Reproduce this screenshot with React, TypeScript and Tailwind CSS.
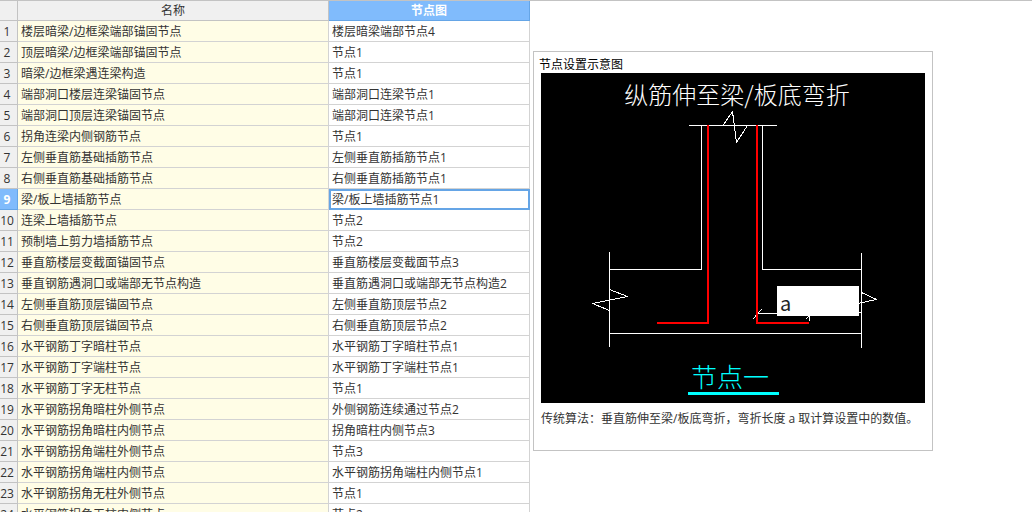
import { useState } from 'react';
import clsx from 'clsx';

interface NodeRow {
  name: string;
  node: string;
}

const rows: NodeRow[] = [
  { name: '楼层暗梁/边框梁端部锚固节点', node: '楼层暗梁端部节点4' },
  { name: '顶层暗梁/边框梁端部锚固节点', node: '节点1' },
  { name: '暗梁/边框梁遇连梁构造', node: '节点1' },
  { name: '端部洞口楼层连梁锚固节点', node: '端部洞口连梁节点1' },
  { name: '端部洞口顶层连梁锚固节点', node: '端部洞口连梁节点1' },
  { name: '拐角连梁内侧钢筋节点', node: '节点1' },
  { name: '左侧垂直筋基础插筋节点', node: '左侧垂直筋插筋节点1' },
  { name: '右侧垂直筋基础插筋节点', node: '右侧垂直筋插筋节点1' },
  { name: '梁/板上墙插筋节点', node: '梁/板上墙插筋节点1' },
  { name: '连梁上墙插筋节点', node: '节点2' },
  { name: '预制墙上剪力墙插筋节点', node: '节点2' },
  { name: '垂直筋楼层变截面锚固节点', node: '垂直筋楼层变截面节点3' },
  { name: '垂直钢筋遇洞口或端部无节点构造', node: '垂直筋遇洞口或端部无节点构造2' },
  { name: '左侧垂直筋顶层锚固节点', node: '左侧垂直筋顶层节点2' },
  { name: '右侧垂直筋顶层锚固节点', node: '右侧垂直筋顶层节点2' },
  { name: '水平钢筋丁字暗柱节点', node: '水平钢筋丁字暗柱节点1' },
  { name: '水平钢筋丁字端柱节点', node: '水平钢筋丁字端柱节点1' },
  { name: '水平钢筋丁字无柱节点', node: '节点1' },
  { name: '水平钢筋拐角暗柱外侧节点', node: '外侧钢筋连续通过节点2' },
  { name: '水平钢筋拐角暗柱内侧节点', node: '拐角暗柱内侧节点3' },
  { name: '水平钢筋拐角端柱外侧节点', node: '节点3' },
  { name: '水平钢筋拐角端柱内侧节点', node: '水平钢筋拐角端柱内侧节点1' },
  { name: '水平钢筋拐角无柱外侧节点', node: '节点1' },
  { name: '水平钢筋拐角无柱内侧节点', node: '节点2' },
];

function NodeTable() {
  const [selected, setSelected] = useState(8);

  return (
    <table className="shrink-0 table-fixed border-separate border-spacing-0 text-[#333333]">
      <colgroup>
        <col className="w-[18px]" />
        <col className="w-[311px]" />
        <col className="w-[201px]" />
      </colgroup>
      <thead>
        <tr className="h-5">
          <td className="border-r border-b border-[#c3c3c3] bg-[#f0f0f0] p-0" />
          <th scope="col" className="border-r border-b border-[#c3c3c3] bg-[#f0f0f0] p-0 pt-px font-normal">
            名称
          </th>
          <th scope="col" className="border-r border-b border-[#65a5e6] bg-[#80bbfc] p-0 pt-px font-bold text-white">
            节点图
          </th>
        </tr>
      </thead>
      <tbody>
        {rows.map((row, i) => (
          <tr key={row.name} className="h-[21px]" onClick={() => setSelected(i)}>
            <th
              scope="row"
              className={clsx(
                'border-r border-b p-0 pt-0.5 pr-[3px]',
                i === selected
                  ? 'border-[#65a5e6] bg-[#80bbfc] font-bold text-white'
                  : 'border-[#c3c3c3] bg-[#f0f0f0] font-normal'
              )}
            >
              {i + 1}
            </th>
            <td className="border-r border-b border-[#d3d3d3] bg-[#fffde6] p-0 pt-0.5 pl-[3px]">{row.name}</td>
            <td
              className={clsx(
                'border-r border-b border-[#d3d3d3] bg-white p-0 pt-0.5 pl-[3px]',
                i === selected && 'outline-2 -outline-offset-2 outline-[#65a5e6]'
              )}
            >
              {row.node}
            </td>
          </tr>
        ))}
      </tbody>
    </table>
  );
}

function NodeDiagram() {
  return (
    <div className="relative w-[384px] bg-black font-['Noto_Sans_CJK_SC',sans-serif]">
      <svg viewBox="0 0 384 330" className="block w-full" fill="none" shapeRendering="crispEdges">
        <text x="196" y="31" textAnchor="middle" fill="#ffffff" className="text-[24px] font-light">
          纵筋伸至梁/板底弯折
        </text>

        <g stroke="#ffffff" strokeWidth="1" strokeLinejoin="bevel">
          {/* wall outline with its break line */}
          <path d="M148 52.5H236M160.5 52V196.5H68M221.5 52V196.5H320" />
          <path d="M182 52.5L191.5 38.5L195.5 69.5L206.5 52.5" />
          {/* beam outline */}
          <path d="M68.5 179V274M320.5 180V275M68 260.5H320" />
          <path d="M68.5 216.5L86.5 223.5L51.5 230.5L68.5 237.5" />
          <path d="M320.5 219.5L335.5 226.5L302.5 233.5M318 239.5H321" />
          {/* bend length dimension */}
          <path d="M216 240.5H300M211.5 246.5L220.5 236.5M264.5 246.5L272.5 238.5M268.5 240V248" />
        </g>

        {/* vertical bars bent along the beam bottom */}
        <path d="M167 52V250H116M216 52V250H268" stroke="#ff0000" strokeWidth="2" />

        <text x="150" y="314" fill="#00ffff" className="text-[26px] font-light">
          节点一
        </text>
        <path d="M147 320.5H238" stroke="#00ffff" strokeWidth="3" />
      </svg>
      <input
        type="text"
        aria-label="弯折长度 a"
        defaultValue="a"
        className="absolute top-[213px] left-[236px] h-[30px] w-[82px] bg-white px-[3px] pt-0.5 text-[20px] text-[#222222] outline-none"
      />
    </div>
  );
}

export default function App() {
  return (
    <main className="flex h-screen items-start gap-[3px] overflow-hidden border-t border-[#c3c3c3] bg-white font-['Open_Sans','Noto_Sans_CJK_SC',sans-serif] text-[12px] leading-[18px]">
      <NodeTable />
      <section className="mt-[50px] h-[400px] w-[400px] shrink-0 border border-[#c3c3c3] px-[7px]">
        <h2 className="-ml-0.5 h-[21px] pt-1 text-black">节点设置示意图</h2>
        <NodeDiagram />
        <p className="pt-[7px] whitespace-nowrap text-[#333333]">
          传统算法：垂直筋伸至梁/板底弯折，弯折长度 a 取计算设置中的数值。
        </p>
      </section>
    </main>
  );
}
